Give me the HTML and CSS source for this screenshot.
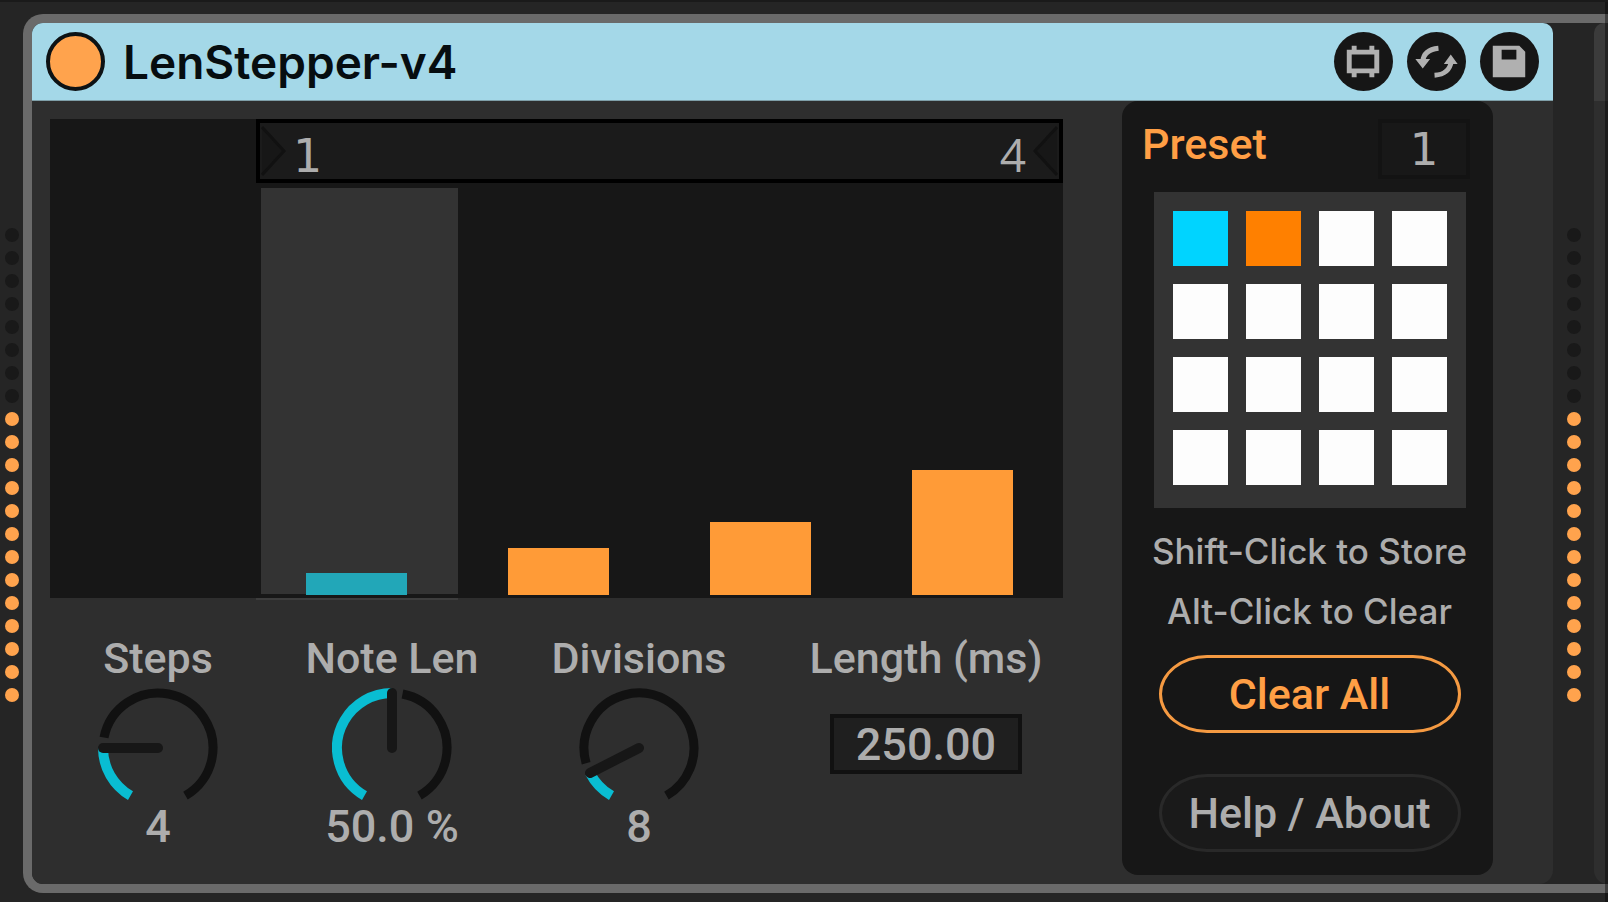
FILE: index.html
```html
<!DOCTYPE html>
<html lang="en">
<head>
<meta charset="utf-8">
<title>LenStepper-v4</title>
<link rel="stylesheet" href="styles.css">
</head>
<body>
<div class="rack">
  <div class="meter" aria-hidden="true">
    <i></i><i></i><i></i><i></i><i></i><i></i><i></i><i></i>
    <i class="on"></i><i class="on"></i><i class="on"></i><i class="on"></i><i class="on"></i><i class="on"></i><i class="on"></i><i class="on"></i><i class="on"></i><i class="on"></i><i class="on"></i><i class="on"></i><i class="on"></i>
  </div>

  <div class="group">
    <main class="device">
      <header class="titlebar">
        <button class="power" aria-label="Device on"></button>
        <h1 class="title">LenStepper-v4</h1>
        <button class="round" aria-label="Edit device">
          <svg viewBox="0 0 60 60"><path fill="#b0b0b0" fill-rule="evenodd" d="M18 14h5v4h13v-4h5v4h5v24h-5v4h-5v-4H23v4h-5v-4h-5V18h5zM18 23v14h23V23z"/></svg>
        </button>
        <button class="round" aria-label="Hot swap">
          <svg viewBox="0 0 60 60"><path fill="none" stroke="#b0b0b0" stroke-width="5" d="M32 16.500Q17 18 16 30M28 44Q43 43 45 30"/><path fill="#b0b0b0" d="M8.500 27.500h15L16 37zM37.500 32.500h14L44.500 23z"/></svg>
        </button>
        <button class="round" aria-label="Save preset">
          <svg viewBox="0 0 60 60"><path fill="#b0b0b0" fill-rule="evenodd" d="M13 14h27l6 6v26H13zM22 18v10h15V18z"/></svg>
        </button>
      </header>

      <div class="body">
        <section class="editor">
          <div class="chart">
            <div class="loop">
              <svg class="arrow" viewBox="0 0 26 52"><path d="M1 2l22 24L1 50"/></svg>
              <span class="num one">1</span>
              <span class="num last">4</span>
              <svg class="arrow" viewBox="0 0 26 52"><path d="M25 2L3 26l22 24"/></svg>
            </div>
            <div class="lanes">
              <div class="lane active"><div class="bar" style="height:5.4%"></div></div>
              <div class="lane"><div class="bar" style="height:11.6%"></div></div>
              <div class="lane"><div class="bar" style="height:18%"></div></div>
              <div class="lane"><div class="bar" style="height:30.7%"></div></div>
            </div>
          </div>

          <div class="controls">
            <div class="control">
              <label for="steps">Steps</label>
              <div class="knob">
                <svg viewBox="0 0 120 114">
                  <circle class="track" cx="60" cy="60" r="55" pathLength="360" stroke-dasharray="229 360" transform="rotate(191 60 60)"/>
                  <circle class="value" cx="60" cy="60" r="55" pathLength="360" stroke-dasharray="60 360" transform="rotate(120 60 60)"/>
                  <path class="hand" d="M60 60H5"/>
                </svg>
                <input id="steps" type="range" min="1" max="16" value="4">
              </div>
              <output for="steps">4</output>
            </div>
            <div class="control">
              <label for="notelen">Note Len</label>
              <div class="knob">
                <svg viewBox="0 0 120 114">
                  <circle class="track" cx="60" cy="60" r="55" pathLength="360" stroke-dasharray="139 360" transform="rotate(281 60 60)"/>
                  <circle class="value" cx="60" cy="60" r="55" pathLength="360" stroke-dasharray="150 360" transform="rotate(120 60 60)"/>
                  <path class="hand" d="M60 60V5"/>
                </svg>
                <input id="notelen" type="range" min="0" max="100" value="50">
              </div>
              <output for="notelen">50.0 %</output>
            </div>
            <div class="control">
              <label for="divisions">Divisions</label>
              <div class="knob">
                <svg viewBox="0 0 120 114">
                  <circle class="track" cx="60" cy="60" r="55" pathLength="360" stroke-dasharray="256 360" transform="rotate(164 60 60)"/>
                  <circle class="value" cx="60" cy="60" r="55" pathLength="360" stroke-dasharray="33 360" transform="rotate(120 60 60)"/>
                  <path class="hand" d="M60 60L11 85"/>
                </svg>
                <input id="divisions" type="range" min="1" max="64" value="8">
              </div>
              <output for="divisions">8</output>
            </div>
            <div class="control">
              <label for="length">Length (ms)</label>
              <input id="length" class="field length" type="text" value="250.00">
            </div>
          </div>
        </section>

        <section class="presets">
          <div class="preset-head">
            <label for="preset">Preset</label>
            <input id="preset" class="field preset-num" type="text" value="1">
          </div>
          <div class="slots">
            <button class="slot current" aria-label="Preset 1"></button><button class="slot stored" aria-label="Preset 2"></button><button class="slot" aria-label="Preset 3"></button><button class="slot" aria-label="Preset 4"></button>
            <button class="slot" aria-label="Preset 5"></button><button class="slot" aria-label="Preset 6"></button><button class="slot" aria-label="Preset 7"></button><button class="slot" aria-label="Preset 8"></button>
            <button class="slot" aria-label="Preset 9"></button><button class="slot" aria-label="Preset 10"></button><button class="slot" aria-label="Preset 11"></button><button class="slot" aria-label="Preset 12"></button>
            <button class="slot" aria-label="Preset 13"></button><button class="slot" aria-label="Preset 14"></button><button class="slot" aria-label="Preset 15"></button><button class="slot" aria-label="Preset 16"></button>
          </div>
          <p class="hint">Shift-Click to Store</p>
          <p class="hint">Alt-Click to Clear</p>
          <button class="pill clear">Clear All</button>
          <button class="pill help">Help / About</button>
        </section>
      </div>
    </main>

    <div class="meter" aria-hidden="true">
      <i></i><i></i><i></i><i></i><i></i><i></i><i></i><i></i>
      <i class="on"></i><i class="on"></i><i class="on"></i><i class="on"></i><i class="on"></i><i class="on"></i><i class="on"></i><i class="on"></i><i class="on"></i><i class="on"></i><i class="on"></i><i class="on"></i><i class="on"></i>
    </div>
    <div class="next"></div>
  </div>
</div>
</body>
</html>
```
FILE: styles.css
```css
* { box-sizing: border-box; }

body {
  margin: 0;
  background: #252525;
  color: #adadad;
  font: 500 43px/50px Roboto, "Liberation Sans", sans-serif;
}

button, input { font: inherit; color: inherit; margin: 0; padding: 0; }

.rack {
  position: relative;
  display: flex;
  min-height: 100vh;
  padding: 12px 0 9px;
  border-top: 2px solid #1a1a1a;
}

/* shaded window edge */
.rack::after {
  content: "";
  position: absolute;
  top: 0;
  right: 0;
  bottom: 0;
  width: 3px;
  background: rgba(0, 0, 0, .4);
}

.meter {
  display: flex;
  flex-direction: column;
  justify-content: center;
  align-items: center;
  gap: 9px;
  padding-top: 23px;
  width: 23px;
}
.meter i { width: 14px; height: 14px; border-radius: 50%; background: #191919; }
.meter .on { background: #ffa34d; }

.group {
  flex: 1;
  display: flex;
  border: 9px solid #6a6a6a;
  border-right: 0;
  border-radius: 20px 0 0 20px;
}
.group .meter { width: 41px; }

.next {
  width: 14px;
  border-radius: 10px 0 0 14px;
  background: linear-gradient(#3b3b3b 78px, #2e2e2e 78px);
}

.device {
  flex: 1;
  display: flex;
  flex-direction: column;
  border-radius: 11px 10px 14px 11px;
  background: #2e2e2e;
  overflow: hidden;
}

.titlebar {
  display: flex;
  align-items: center;
  gap: 14px;
  height: 78px;
  padding: 0 14px;
  background: #a4d8e8;
  border-bottom: 1px solid #7f9fa8;
}
.power, .round { width: 59px; height: 59px; border-radius: 50%; border: 0; flex: none; }
.power { background: #ffa34d; border: 4px solid #0d1214; }
.round { background: #161616; }
.round svg { display: block; width: 59px; height: 59px; }
.title {
  flex: 1;
  margin: 0 0 0 4px;
  color: #060d10;
  font: 600 46px/50px Inter, "Liberation Sans", sans-serif;
}

.body {
  flex: 1;
  display: flex;
  gap: 59px;
  padding: 0 60px 9px 18px;
}

.editor { flex: 1; display: flex; flex-direction: column; padding-top: 18px; }

.chart {
  flex: 1;
  display: flex;
  flex-direction: column;
  gap: 5px;
  padding: 0 0 3px 206px;
  background: #171717;
}
.loop {
  display: flex;
  align-items: center;
  height: 64px;
  padding: 0 1px;
  border: 4px solid #000;
  background: #1b1b1b;
}
.arrow { width: 26px; height: 52px; }
.arrow path { fill: #171717; stroke: #111; stroke-width: 3; }
.num { padding: 6px 6px 0; font: 400 46px/50px "Open Sans", "Liberation Sans", sans-serif; }
.one { padding-top: 10px; font-family: "DejaVu Sans", sans-serif; }
.last { margin-left: auto; }

.lanes { flex: 1; display: grid; grid-template-columns: repeat(4, 1fr); }
.lane { display: flex; align-items: flex-end; justify-content: center; }
.bar { width: 50%; background: #ff9b37; }
.active {
  position: relative;
  background: linear-gradient(#333, #333) 5px 0 / 100% calc(100% - 1px) no-repeat;
}
.active::after {
  content: "";
  position: absolute;
  left: 0;
  right: 0;
  bottom: -5px;
  height: 2px;
  background: #3d3d3d;
}
.active .bar { background: #22a7b8; }

.controls {
  display: grid;
  grid-template-columns: 216fr 252fr 242fr 332fr;
  margin-right: -29px;
  padding: 35px 0 23px;
}
.control { display: flex; flex-direction: column; align-items: center; gap: 5px; }
.control label, .control output { white-space: nowrap; }
.control output { margin-top: -5px; font-size: 45px; }

.knob { position: relative; width: 120px; height: 114px; }
.knob svg { display: block; width: 120px; height: 114px; }
.knob input { position: absolute; inset: 0; width: 100%; height: 100%; opacity: 0; }
.track, .value, .hand { fill: none; stroke-width: 9; }
.track { stroke: #111; }
.value { stroke: #09bdd2; stroke-width: 10; }
.hand { stroke: #171717; stroke-width: 10; stroke-linecap: round; }

.field {
  height: 60px;
  border: 4px solid #111;
  border-radius: 0;
  background: #1f1f1f;
  font-size: 45px;
  text-align: center;
}
.length { width: 192px; margin-top: 26px; }

.presets {
  display: flex;
  flex-direction: column;
  align-items: center;
  width: 371px;
  padding: 0 0 23px 4px;
  border-radius: 16px;
  background: #171717;
}
.preset-head {
  align-self: stretch;
  display: flex;
  justify-content: space-between;
  padding: 18px 23px 0 16px;
  color: #ff9f45;
}
.preset-num {
  width: 92px;
  background: #181818;
  color: #adadad;
  font-family: "DejaVu Sans", sans-serif;
  border-color: #131313;
}

.slots {
  display: grid;
  grid-template-columns: repeat(4, 1fr);
  gap: 18px;
  width: 312px;
  margin: 13px 0;
  padding: 19px 19px 23px;
  background: #333;
}
.slot { height: 55px; border: 0; border-radius: 0; background: #fdfdfd; }
.current { background: #00d4ff; }
.stored { background: #ff8000; }

.hint {
  margin: 0;
  white-space: nowrap;
  font: 500 35px/60px Inter, "Liberation Sans", sans-serif;
}

.pill {
  width: 302px;
  height: 78px;
  border: 3px solid #292929;
  border-radius: 48px / 39px;
  background: #1a1a1a;
}
.clear { margin: 14px 0 41px; border-color: #f59a42; background: #161616; color: #ff9f45; }
```
